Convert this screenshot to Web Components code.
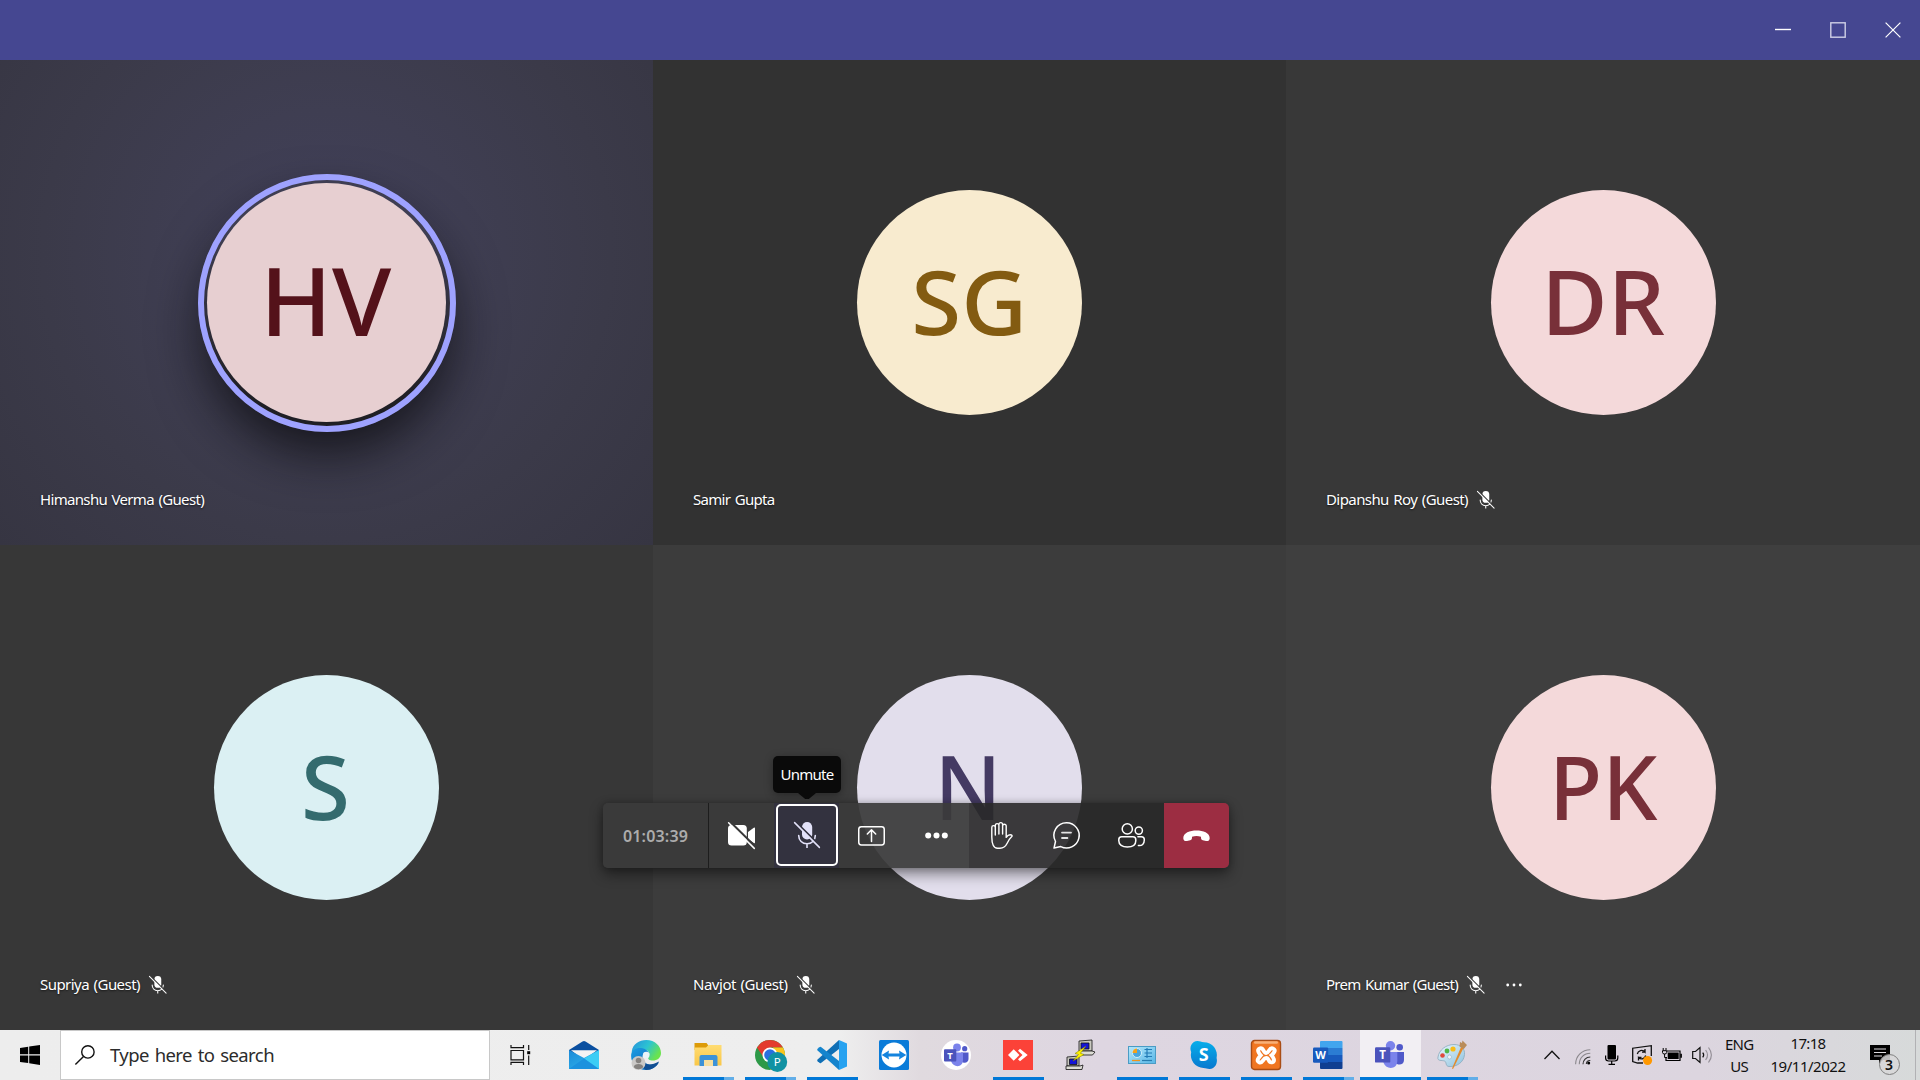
<!DOCTYPE html>
<html lang="en">
<head>
<meta charset="utf-8">
<title>Meeting</title>
<style>
html,body{margin:0;height:100%;overflow:hidden;background:#383838}
body{font-family:"Noto Sans","Open Sans",sans-serif}
</style>
</head>
<body>
<meeting-desktop></meeting-desktop>
<script>
const ICONS = {
  min: ['0 0 16 16', '<path d="M0 7.5H16" stroke="#fff" stroke-width="1.4"/>'],
  max: ['0 0 16 16', '<rect x=".8" y=".8" width="14.4" height="14.4" fill="none" stroke="#cfd0e6" stroke-width="1.4"/>'],
  close: ['0 0 16 16', '<path d="M.6.6 15.4 15.4M15.4.6.6 15.4" stroke="#fff" stroke-width="1.2"/>'],
  micoff: ['0 0 26 26', '<mask id="m"><rect width="26" height="26" fill="#fff"/><path d="M1 -.8 27.5 25.4" stroke="#000" stroke-width="2"/></mask><g mask="url(#m)"><rect x="8" y="0" width="10.2" height="17.6" rx="5.1" fill="currentColor"/><path d="M4.7 13.5c0 5 3.6 8.3 8.3 8.3s8.3-3.3 8.3-8.3M13 22v4" fill="none" stroke="currentColor" stroke-width="1.6" stroke-linecap="round"/></g><path d="M.6.6 25.4 25.4" stroke="currentColor" stroke-width="1.5" stroke-linecap="round"/>'],
  camoff: ['0 0 27 27', '<mask id="m"><rect width="27" height="27" fill="#fff"/><path d="M1 -1.3 28.5 25.7" stroke="#000" stroke-width="2.2"/></mask><g mask="url(#m)" fill="#fff"><rect x="0" y="3" width="18.8" height="20.6" rx="3.5"/><path d="M20 10 25.8 5.7q1.2-.6 1.2.6V20.5q0 1.2-1.2.5L20 17z"/></g><path d="M.6.8 26.3 26.4" stroke="#fff" stroke-width="1.5" stroke-linecap="round"/>'],
  share: ['0 0 27 20', '<g fill="none" stroke="#fff" stroke-width="1.5" stroke-linecap="round" stroke-linejoin="round"><rect x=".75" y=".75" width="25.5" height="18.2" rx="2.6"/><path d="M13.5 15.6V4M9.3 8l4.2-4.2L17.7 8"/></g>'],
  dots: ['0 0 23 7', '<g fill="#fff"><circle cx="3.2" cy="3.5" r="3"/><circle cx="11.5" cy="3.5" r="3"/><circle cx="19.8" cy="3.5" r="3"/></g>'],
  hand: ['0 0 22 27', '<path d="M.8 15V5.4a1.75 1.75 0 0 1 3.5 0V13V3.4a1.8 1.8 0 0 1 3.6 0V12V2.5a1.85 1.85 0 0 1 3.7 0V12V4a1.8 1.8 0 0 1 3.6 0V15.4C16.6 13.4 18.2 12.3 20.3 13q1.3.5.5 1.5C18.6 16.5 17.4 18.6 16 21.5C14.3 25 12 26.2 9 26.2H6.5C2.6 26.2.8 22 .8 15Z" fill="none" stroke="#fff" stroke-width="1.4" stroke-linejoin="round"/>'],
  chat: ['0 0 27 27', '<g fill="none" stroke="#fff" stroke-width="1.5" stroke-linecap="round" stroke-linejoin="round"><path d="M13.6.8a12.6 12.6 0 1 1-5.8 23.8L1 26.1 2.5 19.5A12.6 12.6 0 0 1 13.6.8Z"/><path d="M9 10.6h9M9 16h5.4" stroke="#e4e4e4" stroke-width="1.8"/></g>'],
  people: ['0 0 27 25', '<g fill="none" stroke="#fff" stroke-width="1.5" stroke-linecap="round"><circle cx="9.3" cy="5.9" r="5.1"/><circle cx="20.8" cy="7.6" r="3.6"/><path d="M3.6 13.7H14.9q2.9 0 2.9 3v1c0 4-3.4 6.3-8.5 6.3S.8 21.7.8 17.7v-1q0-3 2.8-3ZM19.9 13.7h3.6q2.8 0 2.8 2.9v.5c0 3.9-2.3 5.9-5.9 5.4"/></g>'],
  hang: ['0 0 27 12', '<path d="M13.5.4C20 .4 27 2.8 26.7 8.2 26.6 11 24.5 11.4 22 10.8L19.8 10.3C18 9.8 18 8.5 18 6.8 15 5.7 12 5.7 9 6.8 9 8.5 9 9.8 7.2 10.3L5 10.8C2.5 11.4.4 11 .3 8.2 0 2.8 7 .4 13.5.4Z" fill="#fff"/>'],
  tiledots: ['0 0 16 4', '<g fill="#fff"><circle cx="1.7" cy="2" r="1.4"/><circle cx="8" cy="2" r="1.4"/><circle cx="14.3" cy="2" r="1.4"/></g>'],
  win: ['0 0 20 20', '<path d="M0 2.9 8.2 1.8V9.3H0ZM9.2 1.6 20 0V9.3H9.2ZM0 10.4H8.2V18L0 16.9ZM9.2 10.4H20V20L9.2 18.3Z"/>'],
  search: ['0 0 20 20', '<g fill="none" stroke="#111" stroke-width="1.4"><circle cx="12.9" cy="6.9" r="6.2"/><path d="M8.5 11.4.4 19.6"/></g>'],
  taskview: ['0 0 21 20', '<path d="M1 0v2.7H13.5V0M1 20v-2.7H13.5V20M1 5.5H13.5V14.8H1ZM18.7 0v5M18.7 10.5V20" fill="none" stroke="#111" stroke-width="1.2"/><rect x="17.2" y="6.2" width="3" height="3"/>'],
  mail: ['0 0 30 30', '<defs><linearGradient id="g" x2="1" y2="1"><stop stop-color="#1b8ad8"/><stop offset="1" stop-color="#32b9ee"/></linearGradient></defs><path d="M0 10 13.5 1.5q1.5-1 3 0L30 10V14H0Z" fill="#0a4fa0"/><path d="M2 10.3H28L15 20Z" fill="#f4f4f4"/><path d="M0 10 15 18 30 10V29H0Z" fill="url(#g)"/><path d="M30 10V29L15 18.5Z" fill="#3ccdf5"/><path d="M0 29 15 18.5 30 29Z" fill="#1c92de"/>'],
  edge: ['0 0 30 30', '<defs><linearGradient id="a" y2=".5"><stop stop-color="#2790dd"/><stop offset=".55" stop-color="#2cc4d2"/><stop offset="1" stop-color="#6ae34e"/></linearGradient><linearGradient id="b" y2="1"><stop stop-color="#1c9de3"/><stop offset="1" stop-color="#0b60b4"/></linearGradient></defs><path d="M.8 11C2 4 8 0 15.3 0 24 0 30 6 30 13c0 5-4 7.5-8 7.5s-5.5-1.5-4.5-3.5C20 13 17 10 13 9.5 8 9 3 11 .8 15Z" fill="url(#a)"/><path d="M.1 16C0 10 5.5 7.5 10 8c4.5.3 7.5 3.2 8 5.8-1.5-2-5-2-6.2 1.2C10 21 16 25 20 24.7c3.5 0 6-1 7.8-2.2C25.5 27 20.5 30 15 30 7 30 .1 24 .1 16Z" fill="url(#b)"/><path d="M11.5 18C11.5 24 18 27 28 21.5 26 27 20.5 30 15 30 11 27.5 9.5 21 11.5 18Z" fill="#114f93"/><circle cx="15.2" cy="15" r="3.3" fill="#e9f4f8"/><circle cx="7.5" cy="23" r="7" fill="#cbc9c7"/><circle cx="7.5" cy="20.5" r="2.8" fill="#85827f"/><path d="M2.8 27c0-4 9.4-4 9.4 0-2 3-7.5 3-9.4 0Z" fill="#85827f"/>'],
  explorer: ['0 0 30 30', '<defs><linearGradient id="g" y2="1" x2="0"><stop stop-color="#ffdc72"/><stop offset="1" stop-color="#f9c748"/></linearGradient></defs><path d="M1.5 3h12l1.5 2v5H1.5Z" fill="#dd9b08"/><path d="M1.5 7.5H13L15.5 5H28.5V25.5H1.5Z" fill="url(#g)"/><path d="M6.5 26V17q0-2 2-2H22.5q2 0 2 2V26H20V20H11V26Z" fill="#3b92d8"/><path d="M11 20H20V26H11Z" fill="#f6dfa0"/>'],
  chrome: ['0 0 30 30', '<circle cx="15" cy="15" r="15" fill="#2d9948"/><path d="M2 7.5A15 15 0 0 1 28 7.5H15L9 18Z" fill="#e33b2e"/><path d="M28 7.5A15 15 0 0 1 15 30L21.5 18.5 18 7.5Z" fill="#fbc51c"/><circle cx="15" cy="15" r="7.5" fill="#fff"/><circle cx="15" cy="15" r="5.8" fill="#2a6fe0"/><circle cx="22.3" cy="22" r="9.9" fill="#1192a3"/><text x="22.3" y="26" text-anchor="middle" font-family="Noto Sans" font-size="11.5" fill="#fff">P</text>'],
  vscode: ['0 0 30 30', '<path d="M22 0 30 3.5V26.5L22 30Z" fill="#27a2f0"/><path d="M22 0 .6 19.4q-.9.9 0 1.8l1.8 1.6q.8.6 1.6.1L22 9Z" fill="#0f6fb5"/><path d="M22 30 .6 10.6q-.9-.9 0-1.8L2.4 7.2q.8-.6 1.6-.1L22 21Z" fill="#1484cd"/>'],
  teamviewer: ['0 0 30 30', '<rect width="30" height="30" rx="1.5" fill="#0a7bd8"/><circle cx="15" cy="15" r="12.5" fill="#fff"/><path d="M2.7 15 10 10.5 9.5 13.5H20.5L20 10.5 27.3 15 20 19.5 20.5 16.5H9.5L10 19.5Z" fill="#1484de"/>'],
  teamsw: ['0 0 30 30', '<circle cx="15" cy="15" r="15" fill="#fff"/><circle cx="16" cy="7.5" r="3.9" fill="#7b83eb"/><circle cx="23.7" cy="8.7" r="2.6" fill="#5059c9"/><path d="M20 12.5H27.5V19c0 4-5 5-7.5 2Z" fill="#5059c9"/><path d="M11 12.5H22V20c0 8-10 8-12 1Z" fill="#7b83eb"/><rect x="3" y="9.2" width="12.3" height="12.3" rx="1" fill="#4b53bc"/><text x="9.1" y="18.6" text-anchor="middle" font-family="Noto Sans" font-weight="700" font-size="9.5" fill="#fff">T</text>'],
  anydesk: ['0 0 30 30', '<rect width="30" height="30" fill="#fc4238"/><path d="M5 15 10.7 9.3 16.4 15 10.7 20.7Z" fill="#fff"/><path d="M15 10.8 17 8.8 24.7 15 17 21.2 15 19.2 19.5 15Z" fill="#fff"/>'],
  putty: ['0 0 30 30', '<g stroke="#111" stroke-width=".8"><path d="M14 1 27 0V11H14Z" fill="#c9c9c0"/><path d="M16 3H24V9H16Z" fill="#1414d8"/><path d="M14 11H27l3 1-2.5 3H16Z" fill="#dcdcd4"/><path d="M2 17 14 16V26H2Z" fill="#c9c9c0"/><path d="M4.5 19H12V24.5H4.5Z" fill="#1414d8"/><path d="M1 26H15l3-1-1 4.5H1Z" fill="#dcdcd4"/></g><path d="M21 6 10 13.5 13.5 14.5 8 21 19 14.5 15.5 13.2Z" fill="#fff200" stroke="#777400" stroke-width=".5"/>'],
  control: ['0 0 30 30', '<defs><linearGradient id="g" x2="1" y2="1"><stop stop-color="#b6e8fb"/><stop offset="1" stop-color="#57b6e7"/></linearGradient></defs><rect x="1.5" y="6.5" width="27" height="17" fill="url(#g)" stroke="#4b9cc5"/><circle cx="10" cy="13" r="4.5" fill="#4aa6dd" stroke="#e8faff" stroke-width=".8"/><path d="M10 13V8.5A4.5 4.5 0 0 0 5.5 13Z" fill="#f4a21c"/><path d="M17.5 9.5H25M17.5 13H25M17.5 16.5H25M20 8V18" stroke="#227bb6" stroke-width="1.2"/><path d="M5 20.5H13" stroke="#f0941b" stroke-width="1.3"/><path d="M15 20.5H25" stroke="#277daf" stroke-width="1.2"/>'],
  skype: ['0 0 30 30', '<defs><linearGradient id="g" y2="1" x2="0"><stop stop-color="#06aeea"/><stop offset="1" stop-color="#0878cf"/></linearGradient></defs><path d="M8.5 1C11 1 12 2.2 15 2.2A13 13 0 0 1 27.6 18C29 23 26 29 20.5 29 18 29 17 28 14.5 28A13 13 0 0 1 2.2 12C0 7 3 1 8.5 1Z" fill="url(#g)"/><text x="14.8" y="21.3" text-anchor="middle" font-family="Noto Sans" font-weight="700" font-size="18" fill="#fff">S</text>'],
  xampp: ['0 0 30 30', '<rect x=".5" y=".5" width="29" height="29" rx="3" fill="#f07622" stroke="#a94d16" stroke-width="1.4"/><rect x="3" y="1.3" width="24" height="2.5" rx="1.2" fill="#f8b077"/><path d="M8.5 8.5C13 7 12 13 15.2 13S18 7 22 8.5 22 14 20.5 15.3C22 17 25 21.5 21 22.3S18.5 18 15.2 18 12 23.5 8.3 22.3 8 17 9.7 15.3C8 13.5 5.5 9.5 8.5 8.5Z" fill="none" stroke="#fff" stroke-width="3.9"/>'],
  word: ['0 0 30 30', '<path d="M7 2q0-1 1-1H28.5q1 0 1 1V8H7Z" fill="#41a5ee"/><path d="M7 8H29.5V15H7Z" fill="#2b7cd3"/><path d="M7 15H29.5V22H7Z" fill="#185abd"/><path d="M7 22H29.5V28q0 1-1 1H8q-1 0-1-1Z" fill="#103f91"/><rect x="0" y="7.5" width="15.2" height="15.2" rx="1.2" fill="#185abd"/><text x="7.6" y="19" text-anchor="middle" font-family="Noto Sans" font-weight="700" font-size="11" fill="#fff">W</text>'],
  teams: ['0 0 30 30', '<circle cx="15.5" cy="5.8" r="4.7" fill="#7b83eb"/><circle cx="24.7" cy="7.2" r="3.3" fill="#5059c9"/><path d="M20 12H29V20c0 5-6 6-9 2.5Z" fill="#5059c9"/><path d="M9 12H22.3V21c0 9-12 9-14 1Z" fill="#7b83eb"/><rect x="0" y="7.3" width="15.3" height="15.3" rx="1.2" fill="#4b53bc"/><text x="7.6" y="19" text-anchor="middle" font-family="Noto Sans" font-weight="700" font-size="11.5" fill="#fff">T</text>'],
  paint: ['0 0 30 30', '<defs><linearGradient id="g" x2="1" y2="1"><stop stop-color="#eaf7fd"/><stop offset="1" stop-color="#8dc2df"/></linearGradient></defs><path d="M1 17C2 10 9 4.5 17 4.5c7 0 11 4 10.5 10C27 22 20 27 12 26.5c-4-.3-2-4.5-4.5-5.5S0 21.5 1 17Z" fill="url(#g)" stroke="#8aa9bb" stroke-width=".8"/><circle cx="5.5" cy="15.5" r="2.3" fill="#e04a3d"/><circle cx="10" cy="11" r="2.4" fill="#51b749"/><circle cx="16" cy="9" r="2.6" fill="#f8bc18"/><circle cx="12.5" cy="17" r="2" fill="#f4f4f8" stroke="#8aa9bb" stroke-width=".5"/><path d="M24 7 26.5 8 16 29 15 28.5Z" fill="#e38b2c"/><path d="M22.5 6.5 23 2 25 3 25.5.5 30 5 26.8 9Z" fill="#b98c5a"/>'],
  chev: ['0 0 16 10', '<path d="M.5 9 8 1.3 15.5 9" fill="none" stroke="#111" stroke-width="1.3"/>'],
  wifi: ['0 0 16 16', '<g fill="none" stroke="#8b888d" stroke-width="1.1"><path d="M.6 15.3C.6 7 7 .7 15.3.7M4.3 15.3C4.3 9 9 4.3 15.3 4.3"/><path d="M8 15.3C8 11 11 8 15.3 8" stroke="#333"/><path d="M11.3 15A3.8 3.8 0 0 1 15.3 11.5" stroke="#333"/></g><circle cx="13.7" cy="14" r="1.5"/>'],
  mic: ['0 0 13 20', '<rect x="2.5" y="0" width="8.5" height="14.5" rx="1"/><path d="M.6 10.5V13q0 3 3 3H9.8q3 0 3-3V10.5M6.7 16v3.3M3.5 19.4H10" fill="none" stroke="#000" stroke-width="1.2"/>'],
  update: ['0 0 20 20', '<path d="M11 18H5.5L.7 16.5V3.2L19.3.7V11" fill="none" stroke="#111" stroke-width="1.3"/><path d="M5.3 9C6 5.5 10.5 4 13 7V4M13 7.2H10M13.7 10.5C13 14 9 15 6.5 12.5V15.5M6.5 12.3H9.5" fill="none" stroke="#111" stroke-width="1.3"/><circle cx="15.6" cy="15.5" r="4.5" fill="#ff9800"/>'],
  battery: ['0 0 20 14', '<path d="M5 3H18V12.5H4V9M19.3 5.8V9.8" fill="none" stroke="#000" stroke-width="1.2"/><rect x="5.7" y="4.5" width="11" height="6.5"/><path d="M1.2 0V2.5M4 0V2.5M.5 2.7H4.7V4.5Q4.7 6 2.6 6 .5 6 .5 4.5ZM2.6 6V9.5H5" fill="none" stroke="#000"/>'],
  volume: ['0 0 21 20', '<path d="M.7 6.5H3.5L8 2.5V17.5L3.5 13.5H.7Z" fill="none" stroke="#111" stroke-width="1.2"/><path d="M10.7 7.7Q12.7 10 10.7 12.3" fill="none" stroke="#111" stroke-width="1.2"/><path d="M13.6 5Q17.5 10 13.6 15M16.5 2.5Q22.3 10 16.5 17.5" fill="none" stroke="#959098" stroke-width="1.2"/>'],
  note: ['0 0 20 19', '<path d="M0 0H20V15H13L9 18.5V15H0Z"/><path d="M4 4H16M4 7.5H16M4 11H12" stroke="#dddbe0" stroke-width="1.2"/>']
};

function define(name, build) {
  customElements.define(name, class extends HTMLElement {
    constructor() { super(); this.attachShadow({ mode: 'open' }); }
    connectedCallback() {
      if (this.shadowRoot.childNodes.length) return;
      const t = document.createElement('template');
      t.innerHTML = build(this);
      this.shadowRoot.append(t.content.cloneNode(true));
    }
  });
}

/* Icon: name, w, h */
define('ui-icon', el => {
  const [box, body] = ICONS[el.getAttribute('name')];
  const w = el.getAttribute('w') || 30, h = el.getAttribute('h') || w;
  return `<style>:host{display:block;flex:none;width:${w}px;height:${h}px}svg{display:block;overflow:visible}</style>
  <svg viewBox="${box}" width="${w}" height="${h}" preserveAspectRatio="none">${body}</svg>`;
});

/* One line of text tracked to a given advance width */
customElements.define('track-text', class extends HTMLElement {
  constructor() {
    super();
    this.attachShadow({ mode: 'open' }).innerHTML =
      '<style>:host{display:block;flex:none;white-space:nowrap}span{display:inline-block;word-spacing:.08em}</style><span><slot></slot></span>';
  }
  connectedCallback() {
    const w = +this.getAttribute('w'), n = this.textContent.length;
    const s = this.shadowRoot.querySelector('span');
    const natural = s.getBoundingClientRect().width;
    if (w && natural) { s.style.letterSpacing = (w - natural) / n + 'px'; this.style.width = w + 'px'; }
  }
});

define('window-bar', () => `<style>
  :host{display:flex;flex:none;height:60px;background:#454791;justify-content:flex-end;align-items:center;gap:39px;padding-right:19px;box-sizing:border-box}
</style><ui-icon name="min" w="16"></ui-icon><ui-icon name="max" w="16"></ui-icon><ui-icon name="close" w="16"></ui-icon>`);

define('user-avatar', el => {
  const speaking = el.hasAttribute('speaking');
  return `<style>
  :host{display:flex;box-sizing:border-box;width:225px;height:225px;border-radius:50%;align-items:center;justify-content:center;background:${el.getAttribute('bg')};color:${el.getAttribute('fg')};font:540 ${speaking ? 94.5 : 89}px/1 "Noto Sans",sans-serif}
  ${speaking ? ':host{width:258px;height:258px;border:6.5px solid #9ea2ff;padding:3.5px;background:linear-gradient(#3f3e52 20%,#33323f 50%,#1f1f25 88%);box-shadow:0 26px 52px -5px rgba(10,10,13,.78)} .face{background:' + el.getAttribute('bg') + '}' : ''}
  .face{width:100%;height:100%;border-radius:50%;display:flex;align-items:center;justify-content:center}
  .ink{display:block;transform:translate(${el.getAttribute('dx') || 0}px,-2.5px) scaleX(${el.getAttribute('sx') || 1})}
  </style><div class="face"><span class="ink"><slot></slot></span></div>`;
});

define('participant-tile', el => `<style>
  :host{display:grid;background:${el.getAttribute('bg')};min-width:0;min-height:0}
  ::slotted(user-avatar),.label{grid-area:1/1}
  ::slotted(user-avatar){place-self:center}
  .label{align-self:end;display:flex;align-items:center;height:20px;margin:0 0 35px 40px;color:#fff;font-size:15px;line-height:20px;text-shadow:0 1px 2px rgba(0,0,0,.6)}
  .label track-text{padding-bottom:2px}
  .label ui-icon{margin-left:9px}
  .label ui-icon.more{margin-left:21px}
  </style><slot></slot>
  <div class="label"><track-text w="${el.getAttribute('w')}">${el.getAttribute('name')}</track-text>
  ${el.hasAttribute('muted') ? '<ui-icon name="micoff" w="17.5"></ui-icon>' : ''}
  ${el.hasAttribute('more') ? '<ui-icon class="more" name="tiledots" w="16" h="4"></ui-icon>' : ''}</div>`);

define('call-grid', () => `<style>
  :host{display:grid;flex:1;min-height:0;grid-template-columns:653px 633px 634px;grid-template-rows:485px 485px}
  </style>
  <participant-tile name="Himanshu Verma (Guest)" w="164" bg="radial-gradient(circle at 50% 40%,#41405a 0,#3f3e52 33%,#3b3a49 65%,#363542 100%)"><user-avatar speaking bg="#e7cfd1" fg="#54121a" dx="-.7" sx="1.02">HV</user-avatar></participant-tile>
  <participant-tile name="Samir Gupta" w="81.5" bg="#323232"><user-avatar bg="#f8ebcf" fg="#835b11" dx="-.5" sx="1.02">SG</user-avatar></participant-tile>
  <participant-tile name="Dipanshu Roy (Guest)" w="142" bg="#383838" muted><user-avatar bg="#f4d9da" fg="#783039" dx=".5" sx="1.02">DR</user-avatar></participant-tile>
  <participant-tile name="Supriya (Guest)" w="100" bg="#373737" muted><user-avatar bg="#dbf0f3" fg="#346b6e" dx="-1">S</user-avatar></participant-tile>
  <participant-tile name="Navjot (Guest)" w="94.5" bg="#3c3c3c" muted><user-avatar bg="#e2deec" fg="#443a63" dx="-1.5" sx=".97">N</user-avatar></participant-tile>
  <participant-tile name="Prem Kumar (Guest)" w="132" bg="#3f3f3f" muted more><user-avatar bg="#f4d9da" fg="#783039" sx=".98">PK</user-avatar></participant-tile>`);

define('call-toolbar', () => `<style>
  :host{position:absolute;left:603px;top:803px;width:626px;height:65px;display:flex;border-radius:5px;box-shadow:0 6px 14px rgba(0,0,0,.45),0 0 6px rgba(0,0,0,.2);color:#fff}
  .time,.b{display:flex;align-items:center;justify-content:center;box-sizing:border-box}
  .time{width:106px;border-right:1px solid #1d1d1d;border-radius:5px 0 0 5px;background:rgba(58,58,58,.94);color:#acacac;font-size:16px;font-weight:600}
  .b{width:65px;background:rgba(58,58,58,.93)}
  .dark{background:rgba(41,41,41,.91)}
  .mic{position:relative;background:#33323f;color:#e2e1f8;padding:1px 0 0 2px;align-items:flex-start;justify-content:flex-start}
  .mic .ring{width:62px;height:62px;box-sizing:border-box;border:2px solid #fff;border-radius:5px;display:flex;align-items:center;justify-content:center}
  .tip{position:absolute;left:-1px;top:-47px;width:68px;height:37px;box-sizing:border-box;padding-bottom:2px;border-radius:5px;background:#0a0a0a;color:#fff;font-size:15px;display:flex;align-items:center;justify-content:center;box-shadow:0 2px 8px rgba(0,0,0,.35)}
  .tip::after{content:"";position:absolute;left:25px;top:37px;width:18px;height:6px;background:#0a0a0a;clip-path:polygon(0 0,100% 0,60% 100%,40% 100%)}
  .end{background:#9c2d42;border-radius:0 5px 5px 0}
  </style>
  <div class="time"><track-text w="65">01:03:39</track-text></div>
  <div class="b"><ui-icon name="camoff" w="27"></ui-icon></div>
  <div class="b mic"><div class="ring"><ui-icon name="micoff" w="26"></ui-icon></div><div class="tip"><track-text w="53">Unmute</track-text></div></div>
  <div class="b"><ui-icon name="share" w="27" h="20"></ui-icon></div>
  <div class="b"><ui-icon name="dots" w="23" h="7"></ui-icon></div>
  <div class="b dark"><ui-icon name="hand" w="22" h="27"></ui-icon></div>
  <div class="b dark"><ui-icon name="chat" w="27"></ui-icon></div>
  <div class="b dark"><ui-icon name="people" w="27" h="25"></ui-icon></div>
  <div class="b end"><ui-icon name="hang" w="27" h="12"></ui-icon></div>`);

define('task-app', el => {
  const run = el.getAttribute('run'), s = el.getAttribute('size') || 30;
  const bar = { one: '#0078d7', many: 'linear-gradient(90deg,#0078d7 41px,#62aee8 41px)', active: '#0078d7' }[run] || 'none';
  const active = run === 'active';
  return `<style>
  :host{display:grid;grid-template-rows:10px 37px 3px;justify-items:center;flex:none;width:62px;height:50px}
  .cell{grid-row:2;display:flex}
  .bar{grid-row:3;width:${active ? 61 : 51}px;background:${bar}}
  ${active ? ':host{background:linear-gradient(90deg,transparent 1px,#f2eff3 1px)}.bar{margin-left:1px}' : ''}
  </style><div class="cell"><ui-icon name="${el.getAttribute('app')}" w="${s}"></ui-icon></div><div class="bar"></div>`;
});

define('system-tray', () => `<style>
  :host{display:flex;flex:none;height:50px;color:#111;font-size:15px;line-height:22px;width:376px}
  .i{height:50px;display:flex;align-items:center}
  .col{display:flex;flex-direction:column;align-items:center;height:50px;box-sizing:border-box;padding-top:3px}
  .note{position:relative;margin-left:24px;padding-top:15px}
  .badge{position:absolute;left:9px;top:24px;width:19px;height:19px;border:1px solid #808080;border-radius:50%;background:rgba(215,215,217,.86);display:flex;align-items:center;justify-content:center;font-size:14px;font-weight:600}
  .line{width:1px;height:50px;background:#b1b1b4;margin-left:25px}
  </style>
  <div class="i"><ui-icon name="chev" w="16" h="10"></ui-icon></div>
  <div class="i" style="margin-left:15px;padding-top:2px"><ui-icon name="wifi" w="16"></ui-icon></div>
  <div class="i" style="margin-left:14px"><ui-icon name="mic" w="13" h="20"></ui-icon></div>
  <div class="i" style="margin-left:14px"><ui-icon name="update" w="20"></ui-icon></div>
  <div class="i" style="margin-left:10px"><ui-icon name="battery" w="20" h="14"></ui-icon></div>
  <div class="i" style="margin-left:10px"><ui-icon name="volume" w="21" h="20"></ui-icon></div>
  <div class="col" style="margin-left:12px"><track-text w="28.5">ENG</track-text><track-text w="18">US</track-text></div>
  <div class="col" style="margin-left:17px;padding-top:2px"><track-text w="35">17:18</track-text><track-text w="75" style="margin-top:1px">19/11/2022</track-text></div>
  <div class="note"><ui-icon name="note" w="20" h="19"></ui-icon><div class="badge">3</div></div>
  <div class="line"></div>`);

define('task-bar', () => `<style>
  :host{display:flex;flex:none;height:50px;background:linear-gradient(90deg,#ededed 0,#eee 840px,#e0dadf 920px,#ded6e1 1100px,#dcd5df 1700px,#d9d8dc 1830px,#d7dada 1920px)}
  .start{width:60px;display:flex;align-items:center;justify-content:center}
  .search{width:430px;box-sizing:border-box;border:1px solid #c8c8c8;background:#fff;display:flex;align-items:center;padding-left:14px;gap:15px;color:#2c2c2c;font-size:18.5px}
  .search track-text{padding-bottom:2px}
  .view{width:63px;display:flex;align-items:center;padding-left:19.5px;box-sizing:border-box}
  .apps{display:flex;flex:1}
  </style>
  <div class="start"><ui-icon name="win" w="20"></ui-icon></div>
  <div class="search"><ui-icon name="search" w="20"></ui-icon><track-text w="164">Type here to search</track-text></div>
  <div class="view"><ui-icon name="taskview" w="21" h="20"></ui-icon></div>
  <div class="apps">
  <task-app app="mail"></task-app><task-app app="edge"></task-app><task-app app="explorer" run="many"></task-app><task-app app="chrome" run="many"></task-app><task-app app="vscode" run="one"></task-app><task-app app="teamviewer"></task-app><task-app app="teamsw"></task-app><task-app app="anydesk" run="one"></task-app><task-app app="putty"></task-app><task-app app="control" run="one"></task-app><task-app app="skype" run="one"></task-app><task-app app="xampp" run="one"></task-app><task-app app="word" run="many"></task-app><task-app app="teams" run="active"></task-app><task-app app="paint" run="many"></task-app>
  </div>
  <system-tray></system-tray>`);

define('meeting-desktop', () => `<style>
  :host{position:relative;display:flex;flex-direction:column;width:1920px;height:1080px;overflow:hidden}
  </style><window-bar></window-bar><call-grid></call-grid><call-toolbar></call-toolbar><task-bar></task-bar>`);
</script>
</body>
</html>
